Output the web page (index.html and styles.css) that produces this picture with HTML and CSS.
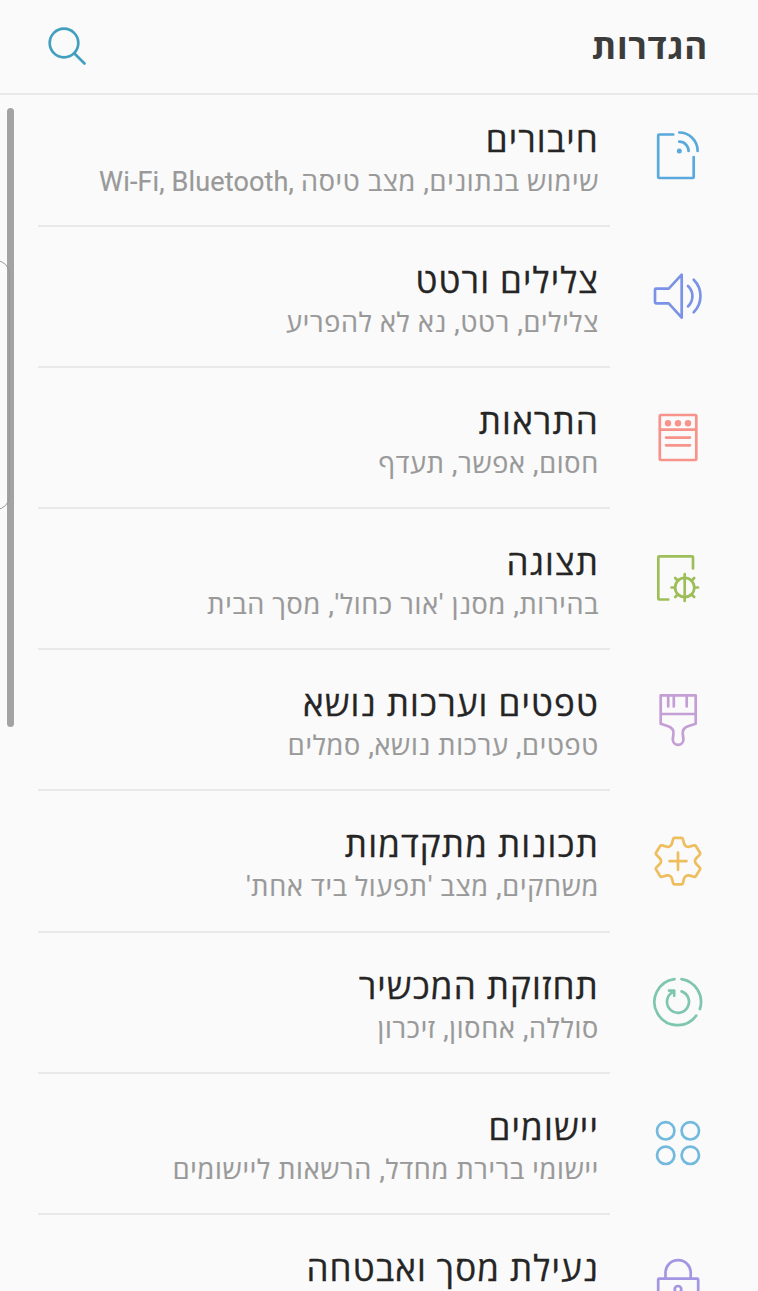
FILE: index.html
```
<!DOCTYPE html>
<html lang="he" dir="rtl">
<head>
  <title>הגדרות</title>
  <meta charset="utf-8">
  <meta name="viewport" content="width=device-width, initial-scale=1" />
  <link rel="stylesheet" href="styles.css">
</head>
<body>

  <header class="bar">
    <h1>הגדרות</h1>
    <svg class="search" viewBox="0 0 40 40"><circle cx="17" cy="17" r="14.3"/><path d="M27.2 27.2L37.5 37.5"/></svg>
  </header>

  <main class="list">
    <div class="row blue">
      <svg class="icon" viewBox="0 0 80 80"><path d="M35.3 18.5H21.2a1 1 0 0 0-1 1V61a1 1 0 0 0 1 1H54.7a1 1 0 0 0 1-1V41M41.3 25.7A9.3 9.3 0 0 1 50.6 35M41.3 16.5A18.3 18.3 0 0 1 59.6 35"/><circle class="dot" cx="41.3" cy="35" r="2.5"/></svg>
      <div class="text"><h2>חיבורים</h2><p dir="ltr"><span class="latin">Wi-Fi, Bluetooth, </span>שימוש בנתונים, מצב טיסה</p></div>
    </div>
    <div class="row indigo">
      <svg class="icon" viewBox="0 0 80 80"><path d="M18 31.7H30.7L43.7 17.7V60.7L30.7 46.3H18a1 1 0 0 1-1-1V32.7a1 1 0 0 1 1-1zM50 29A14 14 0 0 1 50 49.4M55.7 22.7A23 23 0 0 1 55.7 55.3"/></svg>
      <div class="text"><h2>צלילים ורטט</h2><p>צלילים, רטט, נא לא להפריע</p></div>
    </div>
    <div class="row red">
      <svg class="icon" viewBox="0 0 80 80"><rect x="21.8" y="16" width="36.5" height="45" rx="1"/><path d="M22 30.6H58M28 38.6H52M28 46.3H52"/><circle class="dot" cx="30" cy="24.3" r="3.2"/><circle class="dot" cx="40" cy="24.3" r="3.2"/><circle class="dot" cx="50" cy="24.3" r="3.2"/></svg>
      <div class="text"><h2>התראות</h2><p>חסום, אפשר, תעדף</p></div>
    </div>
    <div class="row green">
      <svg class="icon" viewBox="0 0 80 80"><path d="M30.3 59.5H21.3a1 1 0 0 1-1-1V17.4a1 1 0 0 1 1-1H54a1 1 0 0 1 1 1V28.5"/><circle cx="46.7" cy="47.5" r="9.6"/><path d="M46.7 34.2V60.9M33.5 47.5H37M56.5 47.5H60M37.2 38L39.7 40.5M56.2 38L53.7 40.5M37.2 57L39.7 54.5M56.2 57L53.7 54.5"/></svg>
      <div class="text"><h2>תצוגה</h2><p>בהירות, מסנן 'אור כחול', מסך הבית</p></div>
    </div>
    <div class="row purple">
      <svg class="icon" viewBox="0 0 80 80"><path d="M22.7 14.3H57.7V42.8L50 45.2C45 47 44.2 50 44.8 53.5C45.1 55.5 45.4 57 45.4 58.5A5.3 5.3 0 0 1 34.8 58.5C34.8 57 35.1 55.5 35.4 53.5C36 50 35.2 47 30.2 45.2L22.7 42.8zM23 33H57.5M30.2 15V25.5M35.8 15V25.5M48.7 15V25.5"/></svg>
      <div class="text"><h2>טפטים וערכות נושא</h2><p>טפטים, ערכות נושא, סמלים</p></div>
    </div>
    <div class="row yellow">
      <svg class="icon" viewBox="0 0 80 80"><path d="M36.5 15.8H43.5Q44.5 15.8 44.8 16.8L46.2 22Q46.6 23.3 47.8 24Q49.5 25.3 51 24.8L56 23.4Q57.2 23 57.8 24L62 30.8Q62.6 31.8 61.8 32.6L58.2 36.2Q57 37.4 57 39.1Q57 40.8 58.2 42L61.8 45.6Q62.6 46.4 62 47.4L57.8 54.2Q57.2 55.2 56 54.8L51 53.4Q49.5 53 47.8 54.2Q46.6 55 46.2 56.2L44.8 61.4Q44.5 62.4 43.5 62.4H36.5Q35.5 62.4 35.2 61.4L33.8 56.2Q33.4 55 32.2 54.2Q30.5 53 29 53.4L24 54.8Q22.8 55.2 22.2 54.2L18 47.4Q17.4 46.4 18.2 45.6L21.8 42Q23 40.8 23 39.1Q23 37.4 21.8 36.2L18.2 32.6Q17.4 31.8 18 30.8L22.2 24Q22.8 23 24 23.4L29 24.8Q30.5 25.3 32.2 24Q33.4 23.3 33.8 22L35.2 16.8Q35.5 15.8 36.5 15.8zM31.5 39.1H48.5M40 30.5V47.8"/></svg>
      <div class="text"><h2>תכונות מתקדמות</h2><p>משחקים, מצב 'תפעול ביד אחת'</p></div>
    </div>
    <div class="row teal">
      <svg class="icon" viewBox="0 0 80 80"><path d="M43.5 16.1A23.1 23.1 0 0 1 61.9 46M58.2 52.6A23.1 23.1 0 1 1 36.5 16.1M43.6 28.4A11 11 0 1 1 33 30.3L35.6 28.2M31 27.6H36.2V32.8"/></svg>
      <div class="text"><h2>תחזוקת המכשיר</h2><p>סוללה, אחסון, זיכרון</p></div>
    </div>
    <div class="row sky">
      <svg class="icon" viewBox="0 0 80 80"><circle cx="27.7" cy="26.8" r="8.7"/><circle cx="52.3" cy="26.8" r="8.7"/><circle cx="27.7" cy="51.3" r="8.7"/><circle cx="52.3" cy="51.3" r="8.7"/></svg>
      <div class="text"><h2>יישומים</h2><p>יישומי ברירת מחדל, הרשאות ליישומים</p></div>
    </div>
    <div class="row violet">
      <svg class="icon" viewBox="0 0 80 80"><path d="M27.5 33.5V27.7A12.6 12.6 0 0 1 52.7 27.7V33.5M40 47.5V60"/><rect x="20.2" y="33.7" width="40" height="34" rx="1"/><circle cx="40" cy="44.3" r="3.3"/></svg>
      <div class="text"><h2>נעילת מסך ואבטחה</h2><p></p></div>
    </div>
  </main>

  <div class="scrollbar"></div>
  <div class="edge"></div>

</body>
</html>
```
FILE: styles.css
```
* {
  box-sizing: border-box;
}
html, body {
  height: 100%;
}
body {
  margin: 0;
  display: flex;
  flex-direction: column;
  overflow: hidden;
  position: relative;
  background: #fafafa;
  color: #252525;
  font-family: Roboto, "Open Sans", sans-serif;
}
h1, h2, p {
  margin: 0;
  font-weight: normal;
  white-space: nowrap;
}
svg {
  fill: none;
  stroke: currentColor;
  stroke-width: 2.7;
  stroke-linecap: round;
  stroke-linejoin: round;
}

.bar {
  flex: none;
  height: 95px;
  display: flex;
  align-items: center;
  justify-content: space-between;
  padding: 0 50px 2px 47px;
  border-bottom: 2px solid #e9e9e9;
}
.bar h1 {
  font-size: 35px;
  font-weight: bold;
  letter-spacing: .7px;
  color: #3c3c3c;
}
.search {
  width: 40px;
  height: 40px;
  color: #429fbf;
}

.list {
  flex: 1;
  min-height: 0;
  overflow: hidden;
}
.row {
  height: 141.15px;
  display: flex;
  align-items: center;
  padding: 0 40px 0 38px;
}
.row:first-child {
  margin-top: -9.3px;
}
.icon {
  flex: none;
  width: 80px;
  height: 80px;
  margin-left: 28px;
}
.dot {
  fill: currentColor;
  stroke: none;
}
.text {
  flex: 1;
  height: 100%;
  padding: 33px 11px 0 0;
  border-bottom: 2px solid #e9e9e9;
  text-align: right;
}
.text h2 {
  font-size: 35px;
  line-height: 44px;
  letter-spacing: 1.15px;
  -webkit-text-stroke: .3px;
}
.text p {
  font-size: 27px;
  line-height: 38px;
  letter-spacing: .75px;
  color: #999;
  -webkit-text-stroke: .2px;
}
.text .latin {
  letter-spacing: .15px;
}

.blue .icon { color: #5aa9dc; }
.indigo .icon { color: #7b93e6; }
.red .icon { color: #f7938a; }
.green .icon { color: #9dbe58; }
.purple .icon { color: #c39fd6; }
.yellow .icon { color: #eebd5e; }
.teal .icon { color: #7fc6b1; }
.sky .icon { color: #72b9de; }
.violet .icon { color: #a496e3; }

/* float over the list */
.scrollbar {
  position: absolute;
  left: 7px;
  top: 108px;
  width: 7px;
  height: 619px;
  border-radius: 4px;
  background: #a3a3a3;
}
.edge {
  position: absolute;
  left: -30px;
  top: 260px;
  width: 40px;
  height: 250px;
  border: 1px solid #999;
  border-radius: 14px;
}
```
